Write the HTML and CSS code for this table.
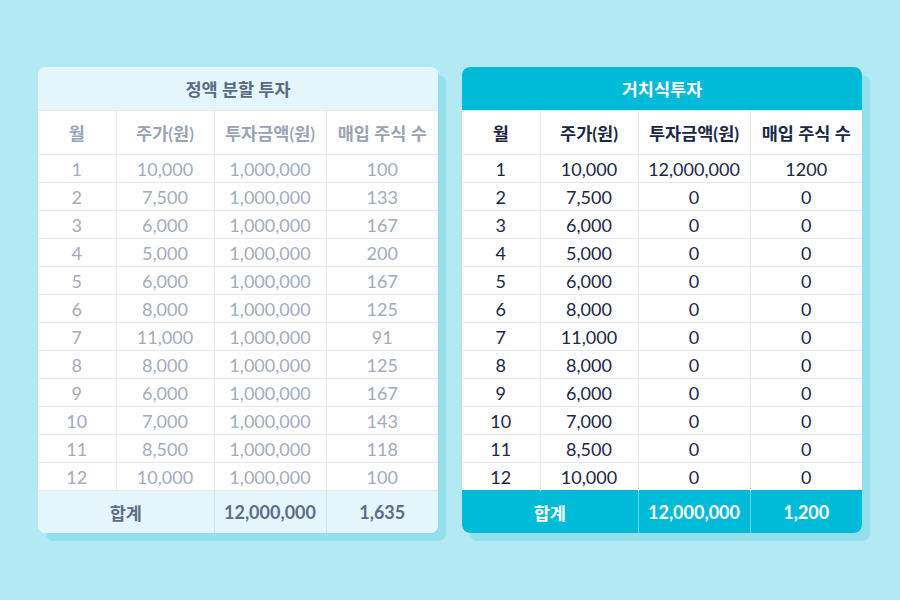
FILE: index.html
```html
<!DOCTYPE html>
<html lang="ko">
<head>
<meta charset="utf-8">
<link rel="stylesheet" href="styles.css">
</head>
<body>
<div class="wrap">
  <div class="card card-muted">
    <div class="title">정액 분할 투자</div>
    <table>
      <colgroup><col class="c1"><col class="c2"><col class="c3"><col class="c4"></colgroup>
      <thead><tr><th>월</th><th>주가(원)</th><th>투자금액(원)</th><th>매입 주식 수</th></tr></thead>
      <tbody>
        <tr><td>1</td><td>10,000</td><td>1,000,000</td><td>100</td></tr>
        <tr><td>2</td><td>7,500</td><td>1,000,000</td><td>133</td></tr>
        <tr><td>3</td><td>6,000</td><td>1,000,000</td><td>167</td></tr>
        <tr><td>4</td><td>5,000</td><td>1,000,000</td><td>200</td></tr>
        <tr><td>5</td><td>6,000</td><td>1,000,000</td><td>167</td></tr>
        <tr><td>6</td><td>8,000</td><td>1,000,000</td><td>125</td></tr>
        <tr><td>7</td><td>11,000</td><td>1,000,000</td><td>91</td></tr>
        <tr><td>8</td><td>8,000</td><td>1,000,000</td><td>125</td></tr>
        <tr><td>9</td><td>6,000</td><td>1,000,000</td><td>167</td></tr>
        <tr><td>10</td><td>7,000</td><td>1,000,000</td><td>143</td></tr>
        <tr><td>11</td><td>8,500</td><td>1,000,000</td><td>118</td></tr>
        <tr><td>12</td><td>10,000</td><td>1,000,000</td><td>100</td></tr>
      </tbody>
      <tfoot><tr><td colspan="2">합계</td><td>12,000,000</td><td>1,635</td></tr></tfoot>
    </table>
  </div>
  <div class="card card-accent">
    <div class="title">거치식투자</div>
    <table>
      <colgroup><col class="c1"><col class="c2"><col class="c3"><col class="c4"></colgroup>
      <thead><tr><th>월</th><th>주가(원)</th><th>투자금액(원)</th><th>매입 주식 수</th></tr></thead>
      <tbody>
        <tr><td>1</td><td>10,000</td><td>12,000,000</td><td>1200</td></tr>
        <tr><td>2</td><td>7,500</td><td>0</td><td>0</td></tr>
        <tr><td>3</td><td>6,000</td><td>0</td><td>0</td></tr>
        <tr><td>4</td><td>5,000</td><td>0</td><td>0</td></tr>
        <tr><td>5</td><td>6,000</td><td>0</td><td>0</td></tr>
        <tr><td>6</td><td>8,000</td><td>0</td><td>0</td></tr>
        <tr><td>7</td><td>11,000</td><td>0</td><td>0</td></tr>
        <tr><td>8</td><td>8,000</td><td>0</td><td>0</td></tr>
        <tr><td>9</td><td>6,000</td><td>0</td><td>0</td></tr>
        <tr><td>10</td><td>7,000</td><td>0</td><td>0</td></tr>
        <tr><td>11</td><td>8,500</td><td>0</td><td>0</td></tr>
        <tr><td>12</td><td>10,000</td><td>0</td><td>0</td></tr>
      </tbody>
      <tfoot><tr><td colspan="2">합계</td><td>12,000,000</td><td>1,200</td></tr></tfoot>
    </table>
  </div>
</div>
</body>
</html>
```

FILE: styles.css
```css
html, body {
  margin: 0;
  padding: 0;
  background: #b3e9f3;
  width: 900px;
  height: 600px;
  overflow: hidden;
}
body {
  font-family: Lato, "Noto Sans CJK KR", sans-serif;
}
.wrap {
  display: flex;
  gap: 24px;
  padding: 67px 0 0 38px;
}
.card {
  width: 400px;
  border-radius: 8px;
  overflow: hidden;
  background: #fff;
  box-shadow: 8px 8px 0 #93dfee;
}
.title {
  height: 43px;
  display: flex;
  align-items: center;
  justify-content: center;
  font-size: 17.5px;
  font-weight: 700;
}
table {
  width: 400px;
  border-collapse: collapse;
  table-layout: fixed;
  text-align: center;
}
.c1 { width: 78px; }
.c2 { width: 98px; }
.c3 { width: 112px; }
.c4 { width: 112px; }
th, td {
  padding: 0;
  border-top: 1px solid #e5e8ec;
  border-left: 1px solid #e5e8ec;
  white-space: nowrap;
}
th:first-child, td:first-child { border-left: none; }
th {
  height: 43px;
  font-size: 17.5px;
  font-weight: 700;
}
tbody td {
  height: 27px;
  font-size: 18px;
  font-weight: 400;
}
tfoot td {
  height: 42px;
  font-size: 18px;
  font-weight: 700;
}
tfoot td:first-child { font-size: 17.5px; }

.card-muted .title { background: #e4f6fb; color: #5b6a85; }
.card-muted th { color: #9aa3b3; font-weight: 600; }
.card-muted tbody td { color: #a3acbb; }
.card-muted tfoot td {
  background: #e4f6fb;
  color: #5e6c86;
  border-left-color: #bfe9f3;
}

.card-accent .title { background: #00bbd8; color: #fff; }
.card-accent th { color: #1c2747; }
.card-accent tbody td { color: #1c2747; }
.card-accent tfoot td {
  background: #00bbd8;
  color: #fff;
  border-top-color: #00bbd8;
  border-left-color: #5fd3e8;
}
```
